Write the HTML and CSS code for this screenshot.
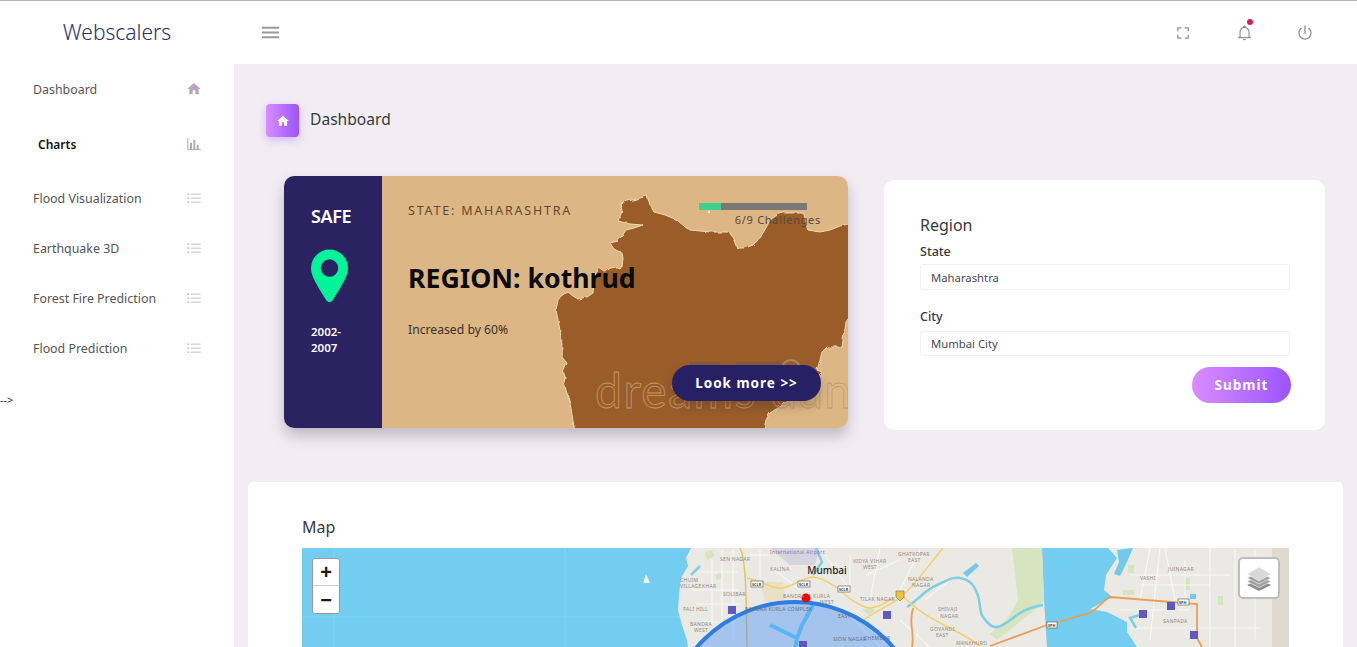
FILE: index.html
```html
<!DOCTYPE html>
<html>
<head>
    <title>Webscalers</title>
    <link rel="stylesheet" href="styles.css">
</head>
<body>
<div class="app">
    <header class="topbar">
        <div class="brand">Webscalers</div>
        <div class="topbar-main">
            <svg class="menu-icon" viewBox="0 0 24 24"><path d="M3,6H21V8H3V6M3,11H21V13H3V11M3,16H21V18H3V16Z"/></svg>
            <div class="topbar-actions">
                <svg class="top-icon" viewBox="0 0 24 24"><path d="M5,5H10V6.5H6.5V10H5V5M14,5H19V10H17.5V6.500H14V5M17.500,14H19V19H14V17.500H17.500V14M10,17.500V19H5V14H6.500V17.500H10Z"/></svg>
                <span class="bell">
                    <svg class="top-icon bell-icon" viewBox="0 0 24 24"><path d="M10 21H14C14 22.1 13.1 23 12 23S10 22.1 10 21M21 19V20H3V19L5 17V11C5 7.9 7 5.2 10 4.3V4C10 2.9 10.9 2 12 2S14 2.9 14 4V4.3C17 5.2 19 7.9 19 11V17L21 19M17.5 11C17.5 8 15 5.5 12 5.5S6.5 8 6.5 11V18.5H17.5V11Z"/></svg>
                    <span class="bell-dot"></span>
                </span>
                <svg class="top-icon" viewBox="0 0 24 24"><path d="M16.56,5.44L15.5,6.5C17.3,7.7 18.5,9.7 18.5,12A6.5,6.5 0 0,1 12,18.5A6.5,6.5 0 0,1 5.5,12C5.5,9.7 6.7,7.7 8.5,6.5L7.44,5.44C5.36,6.88 4,9.28 4,12A8,8 0 0,0 12,20A8,8 0 0,0 20,12C20,9.28 18.64,6.88 16.56,5.44M12.8,3H11.2V13H12.8"/></svg>
            </div>
        </div>
    </header>

    <div class="layout">
        <aside class="sidebar">
            <ul class="nav">
                <li class="nav-item">
                    <span>Dashboard</span>
                    <svg class="nav-icon" viewBox="0 0 24 24"><path d="M10,20V14H14V20H19V12H22L12,3L2,12H5V20H10Z"/></svg>
                </li>
                <li class="nav-item nav-item-active">
                    <span>Charts</span>
                    <svg class="nav-icon" viewBox="0 0 24 24"><path d="M22,21H2V3H3.5V19.5H6V10H9V19.5H11V6H14V19.5H16V13H19V19.5H22V21Z"/></svg>
                </li>
                <li class="nav-item nav-item-gap">
                    <span>Flood Visualization</span>
                    <svg class="nav-icon" viewBox="0 0 24 24"><path d="M7,5.5H22V6.6H7V5.5M7,11.5H22V12.6H7V11.5M7,17.5H22V18.6H7V17.5M2,5.2H4.6V7H2V5.2M2,11.2H4.6V13H2V11.2M2,17.2H4.6V19H2V17.2Z"/></svg>
                </li>
                <li class="nav-item">
                    <span>Earthquake 3D</span>
                    <svg class="nav-icon" viewBox="0 0 24 24"><path d="M7,5.5H22V6.6H7V5.5M7,11.5H22V12.6H7V11.5M7,17.5H22V18.6H7V17.5M2,5.2H4.6V7H2V5.2M2,11.2H4.6V13H2V11.2M2,17.2H4.6V19H2V17.2Z"/></svg>
                </li>
                <li class="nav-item">
                    <span>Forest Fire Prediction</span>
                    <svg class="nav-icon" viewBox="0 0 24 24"><path d="M7,5.5H22V6.6H7V5.5M7,11.5H22V12.6H7V11.5M7,17.5H22V18.6H7V17.5M2,5.2H4.6V7H2V5.2M2,11.2H4.6V13H2V11.2M2,17.2H4.6V19H2V17.2Z"/></svg>
                </li>
                <li class="nav-item">
                    <span>Flood Prediction</span>
                    <svg class="nav-icon" viewBox="0 0 24 24"><path d="M7,5.5H22V6.6H7V5.5M7,11.5H22V12.6H7V11.5M7,17.5H22V18.6H7V17.5M2,5.2H4.6V7H2V5.2M2,11.2H4.6V13H2V11.2M2,17.2H4.6V19H2V17.2Z"/></svg>
                </li>
            </ul>
            <div class="stray">--&gt;</div>
        </aside>

        <main class="content">
            <div class="page-header">
                <span class="page-icon">
                    <svg viewBox="0 0 24 24"><path d="M10,20V14H14V20H19V12H22L12,3L2,12H5V20H10Z"/></svg>
                </span>
                <h3 class="page-title">Dashboard</h3>
            </div>

            <div class="hero-row">
                <section class="region-card">
                    <div class="region-side">
                        <h6 class="safe">SAFE</h6>
                        <svg class="pin" viewBox="5 2 14 20"><path d="M12,12.3A3.3,3.3 0 0,1 8.7,9A3.3,3.3 0 0,1 12,5.7A3.3,3.3 0 0,1 15.3,9A3.3,3.3 0 0,1 12,12.3M12,2A7,7 0 0,0 5,9C5,11.5 6.5,14.5 10.8,21.2Q12,22.6 13.2,21.2C17.5,14.5 19,11.5 19,9A7,7 0 0,0 12,2Z"/></svg>
                        <p class="years">2002-<br>2007</p>
                    </div>
                    <div class="region-body">
                        <svg class="state-map" viewBox="382 176 466 252">
                            <defs>
                                <filter id="rough" x="-5%" y="-5%" width="110%" height="110%">
                                    <feTurbulence type="fractalNoise" baseFrequency="0.12" numOctaves="2" seed="4"/>
                                    <feDisplacementMap in="SourceGraphic" scale="4"/>
                                </filter>
                            </defs>
                            <path class="state-shape" filter="url(#rough)" d="M575,432 L572,415 570,403 566,390 564,383 565,377 563,370 566,362 562,357 563,345 561,337 559,325 556,310 558,300 561,296 568,292 573,296 578,299 587,297 593,293 594,280 598,267 604,271 612,269 622,267 623,258 622,253 614,249 610,243 618,241 622,236 626,230 634,228 643,225 630,224 618,221 621,214 622,210 620,203 632,200 640,198 647,196 650,205 654,212 665,215 677,220 684,226 690,230 710,232 730,232 733,238 737,248 745,248 753,245 760,238 763,233 767,226 770,220 777,215 783,213 795,213 803,213 805,222 808,230 820,232 830,230 840,226 852,223 852,313 846,322 845,330 843,340 842,347 827,347 822,352 820,360 817,370 822,372 815,380 803,387 797,395 790,400 778,408 770,413 766,420 763,432 Z"/>
                            <rect class="smudge" x="690" y="362" width="30" height="5"/>
                            <rect class="smudge" x="736" y="362" width="46" height="5"/>
                            <circle class="smudge-ring" cx="791" cy="369" r="9"/>
                            <circle class="progress-dot" cx="709" cy="212" r="1.200"/>
                            <text class="watermark" x="595" y="408">dreams dance</text>
                        </svg>
                        <div class="region-top">
                            <span class="state-label">STATE: MAHARASHTRA</span>
                            <div class="progress-box">
                                <div class="progress"><div class="progress-fill" style="width: 20%"></div></div>
                                <span class="progress-text">6/9 Challenges</span>
                            </div>
                        </div>
                        <h2 class="region-title">REGION: kothrud</h2>
                        <p class="region-note">Increased by 60%</p>
                        <button class="look-btn">Look more &gt;&gt;</button>
                    </div>
                </section>

                <form class="form-card">
                    <h4 class="form-title">Region</h4>
                    <label class="form-label" for="state">State</label>
                    <input class="form-input" id="state" type="text" value="Maharashtra">
                    <label class="form-label form-label-city" for="city">City</label>
                    <input class="form-input form-input-city" id="city" type="text" value="Mumbai City">
                    <div class="form-actions">
                        <button class="submit-btn" type="button">Submit</button>
                    </div>
                </form>
            </div>

            <section class="map-card">
                <h4 class="map-title">Map</h4>
                <div class="map">
                    <svg class="map-canvas" viewBox="302 548 987 300">
                        <rect class="sea" x="302" y="548" width="987" height="300"/>
                        <path class="grid-line" d="M302,617H680M565,548V700M334,548V700"/>
                        <path class="land" d="M691,548 L686,558 688,566 681,578 679,595 678,610 682,625 687,640 690,660 690,848 1050,848 1047,647 1044,600 1042,548Z"/>
                        <path class="land" d="M1108,548 L1117,558 1106,575 1104,590 1112,597 1090,609 1107,612 1127,622 1127,632 1137,647 1140,848 1289,848 1289,548Z"/>
                        <rect class="terrain" x="1272" y="548" width="17" height="300"/>
                        <path class="airport" d="M770,548H820L815,565H790Z"/>
                        <path class="sand" d="M760,582H783L786,602H765Z"/>
                        <path class="green" d="M1012,548H1042L1044,600 1040,606 997,640 990,634 1008,618 1018,600Z"/>
                        <path class="green" d="M705,552l7,-2 3,6 -8,4Z M715,575l5,-2 2,5 -5,2Z M862,610l8,-3 6,4 -7,4Z M1123,590h11v5h-11Z M1128,565h6v8h-6Z M1184,578h6v12h-6Z M1218,596h5v9h-5Z"/>
                        <path class="street" d="M692,572H738M692,590H738M696,604H740M700,622H735M722,550V630M733,550V640M712,560V625M750,555H770M760,550V580M775,570L800,590M825,555L850,590M850,555V585M866,575L900,560M880,548L870,600M920,550L900,590M925,600L950,580M900,620L930,647M845,610L880,647M1130,575H1230M1140,585H1210M1120,610H1190M1130,628H1260M1150,548L1140,600M1160,548L1150,640M1185,560V600M1165,548L1175,600M1210,548V647M1235,550V647M1250,590H1275M1255,550V640"/>
                        <path class="river" d="M907,607 C918,600 925,590 937,585 C948,580 952,577 960,578 C972,580 975,588 977,593 C981,602 979,612 983,617 C988,624 992,628 997,627 C1005,626 1012,618 1020,613 C1028,608 1036,606 1043,605"/>
                        <path class="river" d="M816,548 L822,562 813,575M691,575L700,566M1143,614L1130,618 1136,628"/>
                        <path class="pond" d="M963,573l13,-10 3,3 -12,11Z"/>
                        <path class="pond" d="M1117,550l16,-2 -6,14 -7,14 -6,-2 5,-12Z M1190,594h6v5h-6Z"/>
                        <path class="road-yellow" d="M943,548 C925,570 915,585 900,598 C890,605 875,612 863,620 M904,597 C925,620 960,630 980,646 M747,578 C760,580 772,590 783,588 C795,585 805,577 813,577 C822,578 830,583 837,588 C845,594 850,600 857,603 C862,606 866,608 870,608 C880,607 888,601 893,598"/>
                        <path class="road-gold" d="M740,548C746,560 746,590 747,647"/>
                        <path class="road-orange" d="M990,646 L1047,625 1090,613 C1098,608 1104,600 1110,597 L1197,604 1197,638 1202,647M913,608 C908,625 915,630 912,647"/>
                        <path class="creek" d="M813,605 L802,625 797,638 793,660M770,625 L797,638"/>
                        <circle class="blast" cx="795" cy="731" r="129"/>
                        <path class="metro" d="M728,606h8v8h-8Z M799,641h8v8h-8Z M883,611h8v8h-8Z M1139,610h8v8h-8Z M1167,602h8v8h-8Z M1190,631h8v8h-8Z"/>
                        <path class="lighthouse" d="M646,574l-3,9h7Z"/>
                        <rect class="road-tag" x="751" y="581" width="12" height="6"/>
                        <rect class="road-tag" x="798" y="581" width="12" height="6"/>
                        <rect class="road-tag" x="838" y="586" width="12" height="6"/>
                        <rect class="road-tag" x="1047" y="622" width="10" height="6"/>
                        <rect class="road-tag" x="1178" y="599" width="11" height="6"/>
                        <circle class="marker" cx="806" cy="598" r="4.500"/>
                        <text class="map-city" x="827" y="574">Mumbai</text>
                        <text class="map-label map-label-airport" x="770" y="554">International Airport</text>
                        <text class="map-label" x="720" y="561">SEN NAGAR</text>
                        <text class="map-label" x="770" y="571">KALINA</text>
                        <text class="map-label" x="680" y="582">CHUIM</text>
                        <text class="map-label" x="680" y="588">VILLAGE</text>
                        <text class="map-label" x="702" y="588">KHAR</text>
                        <text class="map-label" x="723" y="596">SOLIBAR</text>
                        <text class="map-label" x="683" y="611">PALI HILL</text>
                        <text class="map-label" x="690" y="626">BANDRA</text>
                        <text class="map-label" x="694" y="632">WEST</text>
                        <text class="map-label" x="853" y="563">VIDYA VIHAR</text>
                        <text class="map-label" x="863" y="569">WEST</text>
                        <text class="map-label" x="898" y="556">GHATKOPAR</text>
                        <text class="map-label" x="908" y="562">EAST</text>
                        <text class="map-label" x="908" y="581">NALANDA</text>
                        <text class="map-label" x="912" y="587">NAGAR</text>
                        <text class="map-label" x="860" y="601">TILAK NAGAR</text>
                        <text class="map-label" x="938" y="611">SHIVAJI</text>
                        <text class="map-label" x="940" y="618">NAGAR</text>
                        <text class="map-label" x="930" y="631">GOVANDI</text>
                        <text class="map-label" x="936" y="637">EAST</text>
                        <text class="map-label" x="956" y="645">MANKHURD</text>
                        <text class="map-label" x="783" y="598">BANDRA</text>
                        <text class="map-label" x="813" y="598">KURLA</text>
                        <text class="map-label" x="820" y="604">WEST</text>
                        <text class="map-label map-label-dark" x="745" y="611">BANDRA KURLA COMPLEX</text>
                        <text class="map-label map-label-dark" x="838" y="618">EAST</text>
                        <text class="map-label map-label-dark" x="833" y="641">SION NAGAR</text>
                        <text class="map-label map-label-dark" x="864" y="640">CHEMBUR</text>
                        <text class="map-label" x="1168" y="571">JUINAGAR</text>
                        <text class="map-label" x="1140" y="580">VASHI</text>
                        <text class="map-label" x="1163" y="623">SANPADA</text>
                        <text class="map-tag" x="752" y="586">SCLR</text>
                        <text class="map-tag" x="799" y="586">SCLR</text>
                        <text class="map-tag" x="839" y="591">SCLR</text>
                        <text class="map-tag" x="1048" y="627">SPH</text>
                        <text class="map-tag" x="1179" y="604">SPH</text>
                        <path class="shield" d="M896,591h8v6l-4,4 -4,-4Z"/>
                    </svg>
                    <div class="zoom-control">
                        <button class="zoom-btn zoom-in">+</button>
                        <button class="zoom-btn">&minus;</button>
                    </div>
                    <div class="layers-control">
                        <svg viewBox="0 0 26 26">
                            <path class="layer-low" d="M13,14L25,20 13,26 1,20Z"/>
                            <path class="layer-mid" d="M13,10.500L25,16.500 13,22.500 1,16.500Z"/>
                            <path class="layer-mid" d="M13,7L25,13 13,19 1,13Z"/>
                            <path class="layer-top" d="M13,2L25,9 13,16 1,9Z"/>
                        </svg>
                    </div>
                </div>
            </section>
        </main>
    </div>
</div>
</body>
</html>
```

FILE: styles.css
```css
* {
    box-sizing: border-box;
}

html, body {
    margin: 0;
    height: 100%;
    overflow: hidden;
}

body {
    font-family: "Noto Sans", "Open Sans", sans-serif;
    color: #343a40;
    background: #f2edf3;
}

.app {
    height: 647px;
    display: flex;
    flex-direction: column;
    overflow: hidden;
}

/* top bar */
.topbar {
    height: 64px;
    flex-shrink: 0;
    display: flex;
    background: #fff;
    border-top: 1px solid #b3b3b3;
}

.brand {
    width: 234px;
    text-align: center;
    line-height: 62px;
    font-size: 21px;
    font-weight: 300;
    color: #27306b;
}

.topbar-main {
    flex: 1;
    display: flex;
    align-items: center;
    justify-content: space-between;
    padding: 0 42px 0 25px;
}

.menu-icon {
    width: 23px;
    height: 23px;
    fill: #999;
}

.topbar-actions {
    display: flex;
    align-items: center;
    gap: 41px;
}

.top-icon {
    width: 20px;
    height: 20px;
    display: block;
    fill: #8f8f94;
}

.bell {
    position: relative;
    width: 20px;
    display: flex;
    justify-content: center;
}

.bell-icon {
    width: 17px;
    height: 17px;
}

.bell-dot {
    position: absolute;
    top: -5px;
    right: 1px;
    width: 6px;
    height: 6px;
    border-radius: 50%;
    background: #d6204e;
}

/* sidebar */
.layout {
    flex: 1;
    display: flex;
    min-height: 0;
}

.sidebar {
    width: 234px;
    flex-shrink: 0;
    background: #fff;
}

.nav {
    list-style: none;
    margin: 0;
    padding: 0 32px 0 33px;
}

.nav-item {
    height: 50px;
    display: flex;
    align-items: center;
    justify-content: space-between;
    font-size: 12.4px;
    color: #555;
}

.nav-item-active {
    margin-top: 5px;
    padding-left: 5px;
    font-size: 12px;
    font-weight: 600;
    color: #111;
}

.nav-item-gap {
    margin-top: 4px;
}

.nav-icon {
    width: 16px;
    height: 16px;
    fill: #b3a9bb;
}

.stray {
    margin-top: 19px;
    font-size: 11px;
    line-height: 16px;
    color: #333;
}

/* main area */
.content {
    flex: 1;
    min-width: 0;
    padding: 40px 14px 0;
}

.page-header {
    display: flex;
    align-items: center;
    gap: 11px;
    margin-left: 18px;
}

.page-icon {
    width: 33px;
    height: 33px;
    display: flex;
    align-items: center;
    justify-content: center;
    border-radius: 4px;
    background: linear-gradient(to right, #da8cff, #9a55ff);
    box-shadow: 0 3px 8px rgba(154, 85, 255, .35);
}

.page-icon svg {
    width: 14px;
    height: 14px;
    fill: #fff;
}

.page-title {
    margin: 0 0 3px;
    font-size: 15.6px;
    font-weight: 400;
    color: #343a40;
}

.hero-row {
    display: flex;
    align-items: flex-start;
    gap: 36px;
    margin: 39px 18px 0 36px;
}

.region-card {
    width: 564px;
    height: 252px;
    flex-shrink: 0;
    display: flex;
    border-radius: 10px;
    overflow: hidden;
    box-shadow: 0 8px 14px rgba(60, 50, 70, .28);
}

.region-side {
    width: 98px;
    padding: 30px 0 0 27px;
    background: #2a2261;
    color: #fff;
}

.safe {
    margin: 0;
    font-size: 18px;
    line-height: 20px;
    font-weight: 600;
    letter-spacing: -.4px;
}

.pin {
    display: block;
    width: 37px;
    height: 54px;
    margin-top: 23px;
    fill: #00f598;
}

.years {
    margin: 21px 0 0;
    font-size: 11.5px;
    line-height: 16px;
    font-weight: 600;
}

.region-body {
    position: relative;
    flex: 1;
    padding: 27px 27px 0 26px;
    background: #dcb785;
}

.state-map {
    position: absolute;
    top: 0;
    left: 0;
    width: 466px;
    height: 252px;
}

.state-shape {
    fill: #9a5d2a;
    stroke: #f0d9ae;
    stroke-width: 1;
}

.smudge {
    fill: #6f5a4c;
    opacity: .6;
}

.smudge-ring {
    fill: none;
    stroke: #a98a68;
    stroke-width: 2;
}

.progress-dot {
    fill: #fff;
}

.watermark {
    font-family: "Lato", sans-serif;
    font-size: 48px;
    fill: none;
    stroke: #c49a68;
    stroke-width: .8;
    letter-spacing: 1.500px;
}

.region-top,
.region-title,
.region-note,
.look-btn {
    position: relative;
}

.region-top {
    display: flex;
    justify-content: space-between;
    align-items: flex-start;
}

.state-label {
    font-size: 12.500px;
    line-height: 16px;
    letter-spacing: 1.800px;
    color: #5e4a30;
}

.progress-box {
    width: 122px;
    flex-shrink: 0;
    display: flex;
    flex-direction: column;
    align-items: flex-end;
}

.progress {
    width: 108px;
    height: 7px;
    margin-right: 14px;
    background: #7d7876;
}

.progress-fill {
    height: 100%;
    background: #3fcf8e;
}

.progress-text {
    margin-top: 2px;
    font-size: 11px;
    line-height: 15px;
    letter-spacing: .7px;
    color: #5a4636;
}

.region-title {
    margin: 31px 0 0;
    font-size: 26.700px;
    line-height: 40px;
    font-weight: 700;
    color: #0a0a0a;
}

.region-note {
    margin: 23px 0 0;
    font-size: 12.200px;
    line-height: 18px;
    color: #3a3028;
}

.look-btn {
    display: block;
    width: 149px;
    height: 36px;
    margin: 26px 0 0 264px;
    border: 0;
    border-radius: 18px;
    background: #262064;
    color: #fff;
    font-family: inherit;
    font-size: 13.5px;
    font-weight: 700;
    letter-spacing: 1px;
    box-shadow: 0 6px 10px rgba(60, 40, 30, .25);
}

/* region form */
.form-card {
    flex: 1;
    height: 250px;
    margin-top: 4px;
    padding: 34px 35px 0 36px;
    border-radius: 10px;
    background: #fff;
}

.form-title {
    margin: 0;
    font-size: 16px;
    line-height: 22px;
    font-weight: 400;
    color: #343a40;
}

.form-label {
    display: block;
    margin-top: 7px;
    font-size: 12.500px;
    line-height: 18px;
    font-weight: 500;
    color: #343a40;
}

.form-label-city {
    margin-top: 18px;
}

.form-input {
    display: block;
    width: 100%;
    height: 26px;
    margin-top: 3px;
    padding: 0 10px;
    border: 1px solid #f4f1f5;
    border-radius: 2px;
    font-family: inherit;
    font-size: 11.300px;
    color: #4a4a4a;
    background: #fff;
}

.form-input-city {
    height: 25px;
    margin-top: 5px;
}

.form-actions {
    display: flex;
    justify-content: flex-end;
    margin: 11px -1px 0 0;
}

.submit-btn {
    width: 99px;
    height: 36px;
    border: 0;
    border-radius: 18px;
    background: linear-gradient(to right, #da8cff, #9a55ff);
    color: #fff;
    font-family: inherit;
    font-size: 13.5px;
    font-weight: 700;
    letter-spacing: 1px;
}

/* map */
.map-card {
    margin-top: 52px;
    padding: 34px 54px 0;
    border-radius: 5px 5px 0 0;
    background: #fff;
}

.map-title {
    margin: 0 0 10px;
    font-size: 16px;
    line-height: 22px;
    font-weight: 400;
    color: #343a40;
}

.map {
    position: relative;
    height: 300px;
}

.map-canvas {
    display: block;
    width: 100%;
    height: 100%;
}

.sea { fill: #73cdf1; }
.grid-line { fill: none; stroke: #84d4f3; stroke-width: 1; }
.land { fill: #ebe9e3; }
.terrain { fill: #dedad0; }
.airport { fill: #d5d4de; }
.sand { fill: #e9e1c6; }
.green { fill: #d6e5c0; }
.street { fill: none; stroke: #f8f7f4; stroke-width: 1.200; }
.river { fill: none; stroke: #7fcde6; stroke-width: 2.500; }
.creek { fill: none; stroke: #73cdf1; stroke-width: 4; }
.pond { fill: #72c9ec; }
.road-yellow { fill: none; stroke: #f3cf6c; stroke-width: 1.500; }
.road-gold { fill: none; stroke: #e8c45c; stroke-width: 1.500; }
.road-orange { fill: none; stroke: #ee9b55; stroke-width: 1.800; }
.blast { fill: #3388ff; fill-opacity: .38; stroke: #2f7ce2; stroke-width: 4; }
.metro { fill: #5f58c0; }
.lighthouse { fill: #f4f4f4; }
.marker { fill: #f00; }
.shield { fill: #e9c53a; stroke: #555; stroke-width: .5; }
.road-tag { fill: #fff; stroke: #555; stroke-width: .6; }

.map-city {
    font-size: 10px;
    font-weight: 500;
    fill: #222;
    text-anchor: middle;
}

.map-label {
    font-size: 5px;
    letter-spacing: .3px;
    fill: #8b8b86;
}

.map-label-airport {
    fill: #7f7ea6;
}

.map-label-dark {
    fill: #5f6f8c;
}

.map-tag {
    font-size: 3.800px;
    font-weight: 700;
    fill: #444;
}

.zoom-control {
    position: absolute;
    top: 10px;
    left: 10px;
    width: 28px;
    border: 1px solid #9b9b9b;
    border-radius: 3px;
    overflow: hidden;
}

.zoom-btn {
    display: block;
    width: 100%;
    height: 27px;
    padding: 0;
    border: 0;
    background: #fff;
    font-family: "Liberation Sans", sans-serif;
    font-size: 20px;
    line-height: 26px;
    font-weight: 700;
    color: #1a1a1a;
}

.zoom-in {
    border-bottom: 1px solid #ccc;
}

.layers-control {
    position: absolute;
    top: 9px;
    right: 9px;
    width: 42px;
    height: 42px;
    display: flex;
    align-items: center;
    justify-content: center;
    border: 2px solid #bdbdbd;
    border-radius: 5px;
    background: #fff;
}

.layers-control svg {
    width: 26px;
    height: 26px;
}

.layer-low { fill: #8e8e8e; }
.layer-mid { fill: #9f9f9f; stroke: #fff; stroke-width: .6; }
.layer-top { fill: #d8d8d8; stroke: #fff; stroke-width: .6; }
```
